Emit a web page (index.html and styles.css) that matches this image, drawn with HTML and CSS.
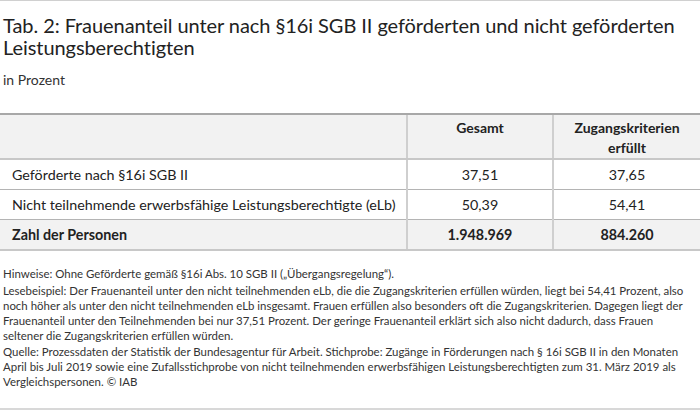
FILE: index.html
```html
<!DOCTYPE html>
<html lang="de">
<head>
<meta charset="utf-8">
<link rel="stylesheet" href="styles.css">
</head>
<body>
<div class="frame">
  <h1 class="title">Tab. 2: Frauenanteil unter nach §16i SGB II geförderten und nicht geförderten Leistungsberechtigten</h1>
  <p class="subtitle">in Prozent</p>
  <table class="data">
    <colgroup>
      <col class="c1"><col class="c2"><col class="c3">
    </colgroup>
    <thead>
      <tr><th class="lbl"></th><th>Gesamt</th><th>Zugangskriterien<br>erfüllt</th></tr>
    </thead>
    <tbody>
      <tr><td class="lbl">Geförderte nach §16i SGB II</td><td>37,51</td><td>37,65</td></tr>
      <tr><td class="lbl">Nicht teilnehmende erwerbsfähige Leistungsberechtigte (eLb)</td><td>50,39</td><td>54,41</td></tr>
      <tr class="total"><td class="lbl">Zahl der Personen</td><td>1.948.969</td><td>884.260</td></tr>
    </tbody>
  </table>
  <div class="notes">
    <p>Hinweise: Ohne Geförderte gemäß §16i Abs. 10 SGB II („Übergangsregelung“).</p>
    <p>Lesebeispiel: Der Frauenanteil unter den nicht teilnehmenden eLb, die die Zugangskriterien erfüllen würden, liegt bei 54,41 Prozent, also noch höher als unter den nicht teilnehmenden eLb insgesamt. Frauen erfüllen also besonders oft die Zugangskriterien. Dagegen liegt der Frauenanteil unter den Teilnehmenden bei nur 37,51 Prozent. Der geringe Frauenanteil erklärt sich also nicht dadurch, dass Frauen seltener die Zugangskriterien erfüllen würden.</p>
    <p>Quelle: Prozessdaten der Statistik der Bundesagentur für Arbeit. Stichprobe: Zugänge in Förderungen nach § 16i SGB II in den Monaten April bis Juli 2019 sowie eine Zufallsstichprobe von nicht teilnehmenden erwerbsfähigen Leistungsberechtigten zum 31. März 2019 als Vergleichspersonen. © IAB</p>
  </div>
</div>
</body>
</html>
```

FILE: styles.css
```css
html, body {
  margin: 0;
  padding: 0;
  background: #fff;
}
body {
  font-family: "Lato", "Liberation Sans", sans-serif;
  color: #222;
}
.frame {
  width: 700px;
  height: 410px;
  box-sizing: border-box;
  border-top: 1px solid #d0d0d0;
  border-bottom: 2px solid #d8d8d8;
  display: flex;
  flex-direction: column;
}
.title {
  margin: 13px 0 0 3px;
  font-size: 20px;
  letter-spacing: -0.07px;
  line-height: 22px;
  font-weight: 400;
  color: #222;
}
.subtitle {
  margin: 13px 0 0 3px;
  font-size: 14px;
  line-height: 18px;
  color: #333;
}
.data {
  margin-top: 24px;
  width: 700px;
  border-collapse: collapse;
  table-layout: fixed;
  font-size: 14.3px;
}
.c1 { width: 407px; }
.c2 { width: 146px; }
.c3 { width: 147px; }
.data th {
  background: #f2f2f2;
  font-weight: 700;
  font-size: 14px;
  text-align: center;
  vertical-align: top;
  padding: 3px 4px 0;
  height: 40px;
  line-height: 20px;
  border-top: 2px solid #a8a8a8;
  border-bottom: 2px solid #c8c8c8;
}
.data td {
  text-align: center;
  height: 29px;
  padding: 0 4px;
  line-height: 18px;
  border-bottom: 1px solid #b4b4b4;
}
.data th + th,
.data td + td {
  border-left: 2px solid #cfcfcf;
}
.data .lbl {
  text-align: left;
  padding-left: 12px;
}
.data .total td {
  background: #f2f2f2;
  font-weight: 700;
  border-bottom: 2px solid #c8c8c8;
}
.notes {
  margin-top: 15px;
  padding: 0 6px 0 3px;
  font-size: 11.45px;
  line-height: 15px;
  color: #333;
}
.notes p {
  margin: 0 0 1.5px;
}
```
